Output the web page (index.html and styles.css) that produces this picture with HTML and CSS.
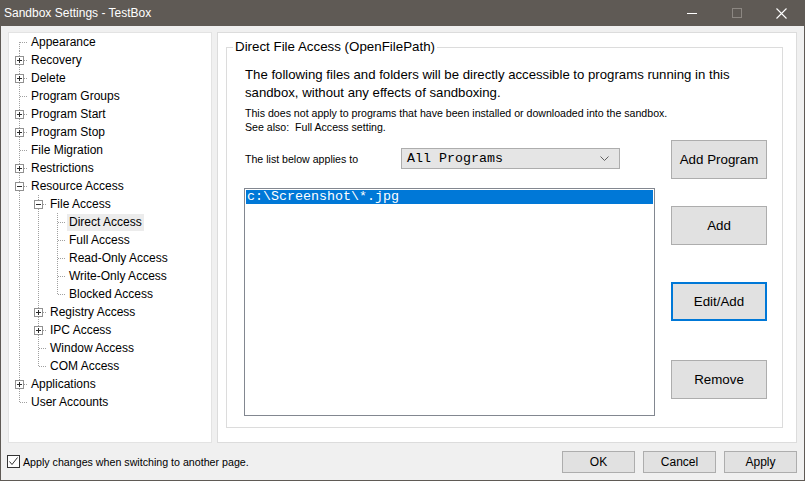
FILE: index.html
```html
<!DOCTYPE html>
<html>
<head>
<meta charset="utf-8">
<title>Sandbox Settings - TestBox</title>
<link rel="stylesheet" href="styles.css">
</head>
<body>
<div class="window">
  <div class="titlebar">
    <span class="title">Sandbox Settings - TestBox</span>
    <div class="controls">
      <div class="ctl"><svg width="10" height="10" viewBox="0 0 10 10"><line x1="0" y1="5.5" x2="10" y2="5.5" stroke="#fff"/></svg></div>
      <div class="ctl"><svg width="10" height="10" viewBox="0 0 10 10"><rect x="0.5" y="0.5" width="9" height="9" fill="none" stroke="#8c8782"/></svg></div>
      <div class="ctl"><svg width="11" height="11" viewBox="0 0 11 11"><path d="M0.5 0.5 L10.5 10.5 M10.5 0.5 L0.5 10.5" stroke="#fff" stroke-width="1.1"/></svg></div>
    </div>
  </div>
  <div class="client">
    <div class="main">
      <div class="tree">
        <div class="row"><svg class="c" width="19" height="18"><line class="d" x1="10.5" y1="9" x2="10.5" y2="18"/><line class="d" x1="11" y1="9.5" x2="19" y2="9.5"/></svg><span class="label">Appearance</span></div>
        <div class="row"><svg class="c" width="19" height="18"><line class="d" x1="10.5" y1="0" x2="10.5" y2="18"/><line class="d" x1="15" y1="9.5" x2="19" y2="9.5"/><rect class="box" x="6.5" y="5.5" width="8" height="8"/><path class="sign" d="M8 9.5 H13 M10.5 7 V12"/></svg><span class="label">Recovery</span></div>
        <div class="row"><svg class="c" width="19" height="18"><line class="d" x1="10.5" y1="0" x2="10.5" y2="18"/><line class="d" x1="15" y1="9.5" x2="19" y2="9.5"/><rect class="box" x="6.5" y="5.5" width="8" height="8"/><path class="sign" d="M8 9.5 H13 M10.5 7 V12"/></svg><span class="label">Delete</span></div>
        <div class="row"><svg class="c" width="19" height="18"><line class="d" x1="10.5" y1="0" x2="10.5" y2="18"/><line class="d" x1="11" y1="9.5" x2="19" y2="9.5"/></svg><span class="label">Program Groups</span></div>
        <div class="row"><svg class="c" width="19" height="18"><line class="d" x1="10.5" y1="0" x2="10.5" y2="18"/><line class="d" x1="15" y1="9.5" x2="19" y2="9.5"/><rect class="box" x="6.5" y="5.5" width="8" height="8"/><path class="sign" d="M8 9.5 H13 M10.5 7 V12"/></svg><span class="label">Program Start</span></div>
        <div class="row"><svg class="c" width="19" height="18"><line class="d" x1="10.5" y1="0" x2="10.5" y2="18"/><line class="d" x1="15" y1="9.5" x2="19" y2="9.5"/><rect class="box" x="6.5" y="5.5" width="8" height="8"/><path class="sign" d="M8 9.5 H13 M10.5 7 V12"/></svg><span class="label">Program Stop</span></div>
        <div class="row"><svg class="c" width="19" height="18"><line class="d" x1="10.5" y1="0" x2="10.5" y2="18"/><line class="d" x1="11" y1="9.5" x2="19" y2="9.5"/></svg><span class="label">File Migration</span></div>
        <div class="row"><svg class="c" width="19" height="18"><line class="d" x1="10.5" y1="0" x2="10.5" y2="18"/><line class="d" x1="15" y1="9.5" x2="19" y2="9.5"/><rect class="box" x="6.5" y="5.5" width="8" height="8"/><path class="sign" d="M8 9.5 H13 M10.5 7 V12"/></svg><span class="label">Restrictions</span></div>
        <div class="row"><svg class="c" width="19" height="18"><line class="d" x1="10.5" y1="0" x2="10.5" y2="18"/><line class="d" x1="15" y1="9.5" x2="19" y2="9.5"/><rect class="box" x="6.5" y="5.5" width="8" height="8"/><path class="sign" d="M8 9.5 H13"/></svg><span class="label">Resource Access</span></div>
        <div class="row"><svg class="c" width="19" height="18"><line class="d" x1="10.5" y1="0" x2="10.5" y2="18"/></svg><svg class="c" width="19" height="18"><line class="d" x1="10.5" y1="0" x2="10.5" y2="18"/><line class="d" x1="15" y1="9.5" x2="19" y2="9.5"/><rect class="box" x="6.5" y="5.5" width="8" height="8"/><path class="sign" d="M8 9.5 H13"/></svg><span class="label">File Access</span></div>
        <div class="row"><svg class="c" width="19" height="18"><line class="d" x1="10.5" y1="0" x2="10.5" y2="18"/></svg><svg class="c" width="19" height="18"><line class="d" x1="10.5" y1="0" x2="10.5" y2="18"/></svg><svg class="c" width="19" height="18"><line class="d" x1="10.5" y1="0" x2="10.5" y2="18"/><line class="d" x1="11" y1="9.5" x2="19" y2="9.5"/></svg><span class="label selected">Direct Access</span></div>
        <div class="row"><svg class="c" width="19" height="18"><line class="d" x1="10.5" y1="0" x2="10.5" y2="18"/></svg><svg class="c" width="19" height="18"><line class="d" x1="10.5" y1="0" x2="10.5" y2="18"/></svg><svg class="c" width="19" height="18"><line class="d" x1="10.5" y1="0" x2="10.5" y2="18"/><line class="d" x1="11" y1="9.5" x2="19" y2="9.5"/></svg><span class="label">Full Access</span></div>
        <div class="row"><svg class="c" width="19" height="18"><line class="d" x1="10.5" y1="0" x2="10.5" y2="18"/></svg><svg class="c" width="19" height="18"><line class="d" x1="10.5" y1="0" x2="10.5" y2="18"/></svg><svg class="c" width="19" height="18"><line class="d" x1="10.5" y1="0" x2="10.5" y2="18"/><line class="d" x1="11" y1="9.5" x2="19" y2="9.5"/></svg><span class="label">Read-Only Access</span></div>
        <div class="row"><svg class="c" width="19" height="18"><line class="d" x1="10.5" y1="0" x2="10.5" y2="18"/></svg><svg class="c" width="19" height="18"><line class="d" x1="10.5" y1="0" x2="10.5" y2="18"/></svg><svg class="c" width="19" height="18"><line class="d" x1="10.5" y1="0" x2="10.5" y2="18"/><line class="d" x1="11" y1="9.5" x2="19" y2="9.5"/></svg><span class="label">Write-Only Access</span></div>
        <div class="row"><svg class="c" width="19" height="18"><line class="d" x1="10.5" y1="0" x2="10.5" y2="18"/></svg><svg class="c" width="19" height="18"><line class="d" x1="10.5" y1="0" x2="10.5" y2="18"/></svg><svg class="c" width="19" height="18"><line class="d" x1="10.5" y1="0" x2="10.5" y2="10"/><line class="d" x1="11" y1="9.5" x2="19" y2="9.5"/></svg><span class="label">Blocked Access</span></div>
        <div class="row"><svg class="c" width="19" height="18"><line class="d" x1="10.5" y1="0" x2="10.5" y2="18"/></svg><svg class="c" width="19" height="18"><line class="d" x1="10.5" y1="0" x2="10.5" y2="18"/><line class="d" x1="15" y1="9.5" x2="19" y2="9.5"/><rect class="box" x="6.5" y="5.5" width="8" height="8"/><path class="sign" d="M8 9.5 H13 M10.5 7 V12"/></svg><span class="label">Registry Access</span></div>
        <div class="row"><svg class="c" width="19" height="18"><line class="d" x1="10.5" y1="0" x2="10.5" y2="18"/></svg><svg class="c" width="19" height="18"><line class="d" x1="10.5" y1="0" x2="10.5" y2="18"/><line class="d" x1="15" y1="9.5" x2="19" y2="9.5"/><rect class="box" x="6.5" y="5.5" width="8" height="8"/><path class="sign" d="M8 9.5 H13 M10.5 7 V12"/></svg><span class="label">IPC Access</span></div>
        <div class="row"><svg class="c" width="19" height="18"><line class="d" x1="10.5" y1="0" x2="10.5" y2="18"/></svg><svg class="c" width="19" height="18"><line class="d" x1="10.5" y1="0" x2="10.5" y2="18"/><line class="d" x1="11" y1="9.5" x2="19" y2="9.5"/></svg><span class="label">Window Access</span></div>
        <div class="row"><svg class="c" width="19" height="18"><line class="d" x1="10.5" y1="0" x2="10.5" y2="18"/></svg><svg class="c" width="19" height="18"><line class="d" x1="10.5" y1="0" x2="10.5" y2="10"/><line class="d" x1="11" y1="9.5" x2="19" y2="9.5"/></svg><span class="label">COM Access</span></div>
        <div class="row"><svg class="c" width="19" height="18"><line class="d" x1="10.5" y1="0" x2="10.5" y2="18"/><line class="d" x1="15" y1="9.5" x2="19" y2="9.5"/><rect class="box" x="6.5" y="5.5" width="8" height="8"/><path class="sign" d="M8 9.5 H13 M10.5 7 V12"/></svg><span class="label">Applications</span></div>
        <div class="row"><svg class="c" width="19" height="18"><line class="d" x1="10.5" y1="0" x2="10.5" y2="10"/><line class="d" x1="11" y1="9.5" x2="19" y2="9.5"/></svg><span class="label">User Accounts</span></div>
      </div>
      <div class="page">
        <div class="group">
          <div class="legend">Direct File Access (OpenFilePath)</div>
          <p class="desc">The following files and folders will be directly accessible to programs running in this<br>sandbox, without any effects of sandboxing.</p>
          <p class="note">This does not apply to programs that have been installed or downloaded into the sandbox.<br>See also:&nbsp; Full Access setting.</p>
          <div class="work">
            <div class="left">
              <div class="applies">
                <span class="lbl">The list below applies to</span>
                <div class="combo"><span class="combo-text">All Programs</span><svg class="chev" width="9" height="5" viewBox="0 0 9 5"><path d="M0.5 0.5 L4.5 4.5 L8.5 0.5" fill="none" stroke="#606060"/></svg></div>
              </div>
              <div class="listbox"><div class="item sel">c:\Screenshot\*.jpg</div></div>
            </div>
            <div class="buttons">
              <div class="btn">Add Program</div>
              <div class="btn b-add">Add</div>
              <div class="btn b-edit focus">Edit/Add</div>
              <div class="btn b-remove">Remove</div>
            </div>
          </div>
        </div>
      </div>
    </div>
    <div class="footer">
      <div class="check"><svg width="13" height="13" viewBox="0 0 13 13"><rect x="0.5" y="0.5" width="12" height="12" fill="#fff" stroke="#333"/><path d="M2.5 6.5 L5 9.5 L10.5 2.5" fill="none" stroke="#333" stroke-width="1"/></svg></div>
      <span class="check-label">Apply changes when switching to another page.</span>
      <div class="fbtns">
        <div class="fbtn">OK</div>
        <div class="fbtn">Cancel</div>
        <div class="fbtn">Apply</div>
      </div>
    </div>
  </div>
</div>
</body>
</html>
```
FILE: styles.css
```css
html, body {
  margin: 0;
  padding: 0;
  background: #f0f0f0;
}
body {
  font-family: "Liberation Sans", Arial, sans-serif;
  color: #000;
}
.window {
  width: 805px;
  height: 481px;
  display: flex;
  flex-direction: column;
  background: #f0f0f0;
  overflow: hidden;
}
.titlebar {
  height: 26px;
  flex: none;
  background: #5f5a55;
  color: #fff;
  display: flex;
  align-items: center;
  font-size: 12px;
}
.title {
  flex: 1;
  padding-left: 4px;
}
.controls {
  display: flex;
  height: 100%;
  padding-right: 1px;
}
.ctl {
  width: 45px;
  display: flex;
  align-items: center;
  justify-content: center;
}
.ctl svg { display: block; }
.client {
  flex: 1;
  display: flex;
  flex-direction: column;
  border: 1px solid #5f5a55;
  border-top: none;
  min-height: 0;
}
.main {
  display: flex;
  gap: 5px;
  height: 417px;
  box-sizing: border-box;
  padding: 6px 7px 0 7px;
  flex: none;
}
.tree {
  width: 204px;
  height: 411px;
  box-sizing: border-box;
  background: #fff;
  border: 1px solid #e3e3e3;
  font-size: 12px;
}
.row {
  display: flex;
  align-items: center;
  height: 18px;
}
.row svg { display: block; flex: none; }
.d {
  stroke: #a0a0a0;
  stroke-width: 1;
  stroke-dasharray: 1 1;
}
.box {
  fill: #fff;
  stroke: #919191;
}
.sign {
  stroke: #2b2b2b;
  fill: none;
}
.label {
  margin-left: 1px;
  padding: 0 2px;
  line-height: 17px;
  white-space: nowrap;
}
.label.selected {
  background: #ececec;
}
.page {
  width: 580px;
  height: 411px;
  box-sizing: border-box;
  background: #fff;
  border: 1px solid #dcdcdc;
  padding: 14px 13px 14px 8px;
  display: flex;
}
.group {
  flex: 1;
  border: 1px solid #dcdcdc;
  display: flex;
  flex-direction: column;
}
.legend {
  align-self: flex-start;
  margin: -9px 0 0 6px;
  padding: 0 2px;
  background: #fff;
  font-size: 13.33px;
  line-height: 16px;
  white-space: nowrap;
}
.desc {
  margin: 11px 0 0 18px;
  font-size: 13.2px;
  line-height: 18px;
  white-space: nowrap;
}
.note {
  margin: 4px 0 0 18px;
  font-size: 10.6px;
  line-height: 14px;
  white-space: nowrap;
}
.work {
  display: flex;
  margin-top: 6px;
  padding: 0 15px 0 17px;
}
.left {
  flex: 1;
  display: flex;
  flex-direction: column;
}
.applies {
  display: flex;
  align-items: center;
  margin-top: 8px;
  height: 21px;
}
.lbl {
  margin-left: 1px;
  width: 156px;
  font-size: 10.6px;
  white-space: nowrap;
}
.combo {
  width: 219px;
  height: 21px;
  box-sizing: border-box;
  border: 1px solid #adadad;
  background: #e5e5e5;
  display: flex;
  align-items: center;
  padding: 0 10px 0 5px;
  font-family: "Liberation Mono", "Courier New", monospace;
  font-size: 13.33px;
}
.combo-text { flex: 1; }
.chev { display: block; }
.listbox {
  margin-top: 19px;
  height: 228px;
  box-sizing: border-box;
  border: 1px solid #828790;
  padding: 1px;
  background: #fff;
}
.item {
  font-family: "Liberation Mono", "Courier New", monospace;
  font-size: 13.33px;
  line-height: 14px;
  padding-left: 1px;
  white-space: nowrap;
}
.item.sel {
  background: #0078d7;
  color: #fff;
}
.buttons {
  width: 96px;
  margin-left: 16px;
  display: flex;
  flex-direction: column;
}
.btn {
  height: 39px;
  box-sizing: border-box;
  border: 1px solid #adadad;
  background: #e1e1e1;
  font-size: 13.33px;
  display: flex;
  align-items: center;
  justify-content: center;
}
.btn.focus {
  border: 2px solid #0078d7;
}
.b-add { margin-top: 27px; }
.b-edit { margin-top: 37px; }
.b-remove { margin-top: 39px; }
.footer {
  flex: 1;
  display: flex;
  align-items: center;
  padding: 0 7px 0 6px;
}
.check svg { display: block; }
.check-label {
  margin-left: 3px;
  font-size: 10.67px;
  white-space: nowrap;
}
.fbtns {
  margin-left: auto;
  display: flex;
  gap: 8px;
}
.fbtn {
  width: 73px;
  height: 22px;
  box-sizing: border-box;
  border: 1px solid #adadad;
  background: #e1e1e1;
  font-size: 12px;
  display: flex;
  align-items: center;
  justify-content: center;
}
```
